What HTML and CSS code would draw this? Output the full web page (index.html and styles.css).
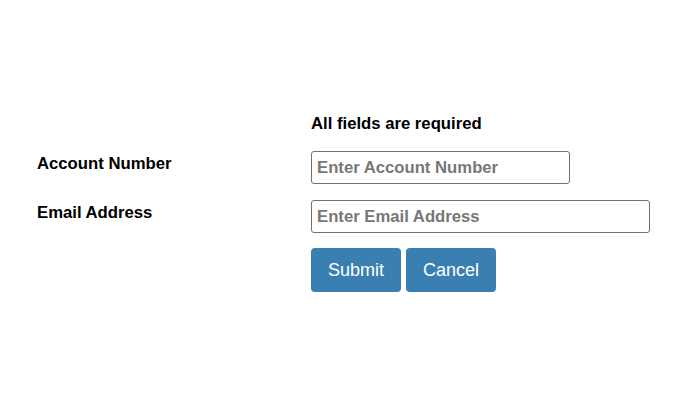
FILE: index.html
```html
<!DOCTYPE html>
<html lang="en">
<head>
    <meta charset="UTF-8">
    <meta name="viewport" content="width=device-width, initial-scale=1.0">
    <title>Account Lookup</title>
    <link rel="stylesheet" href="styles.css">
</head>

<body>
    <form class="lookup-form">
        <div class="form-row">
            <div class="form-label"></div>
            <div class="form-note">All fields are required</div>
        </div>

        <div class="form-row">
            <label class="form-label" for="account">Account Number</label>
            <input type="text" id="account" class="form-input short" placeholder="Enter Account Number" />
        </div>

        <div class="form-row">
            <label class="form-label" for="email">Email Address</label>
            <input type="text" id="email" class="form-input long" placeholder="Enter Email Address" />
        </div>

        <div class="form-row">
            <div class="form-label"></div>
            <div class="form-actions">
                <button type="submit" class="btn">Submit</button>
                <button type="button" class="btn">Cancel</button>
            </div>
        </div>
    </form>
</body>
</html>
```

FILE: styles.css
```css
* {
    box-sizing: border-box;
    margin: 0;
    padding: 0;
}

body {
    font-family: 'Liberation Sans', Arial, sans-serif;
    font-size: 16.7px;
    background-color: #fff;
    color: #000;
}

.lookup-form {
    padding: 115px 0 0 37px;
}

.form-row {
    display: flex;
    align-items: flex-start;
    margin-bottom: 16px;
}

.form-row:first-child {
    margin-bottom: 18px;
}

.form-row:nth-child(3) {
    margin-bottom: 15px;
}

.form-label {
    width: 274px;
    flex-shrink: 0;
    font-weight: bold;
    line-height: 18px;
    padding-top: 4px;
}

.form-note {
    font-weight: bold;
    line-height: 18px;
}

.form-input {
    height: 33px;
    padding: 0 5px;
    border: 1px solid #707070;
    border-radius: 3px;
    font-family: inherit;
    font-size: 16.7px;
    font-weight: bold;
    color: #333;
}

.form-input::placeholder {
    color: #777;
}

.short {
    width: 259px;
}

.long {
    width: 339px;
}

.form-actions {
    display: flex;
    gap: 5px;
}

.btn {
    height: 44px;
    padding: 0 17px;
    border: none;
    border-radius: 4px;
    background-color: #3a7fb2;
    color: #fff;
    font-family: inherit;
    font-size: 18px;
    cursor: pointer;
}
```
